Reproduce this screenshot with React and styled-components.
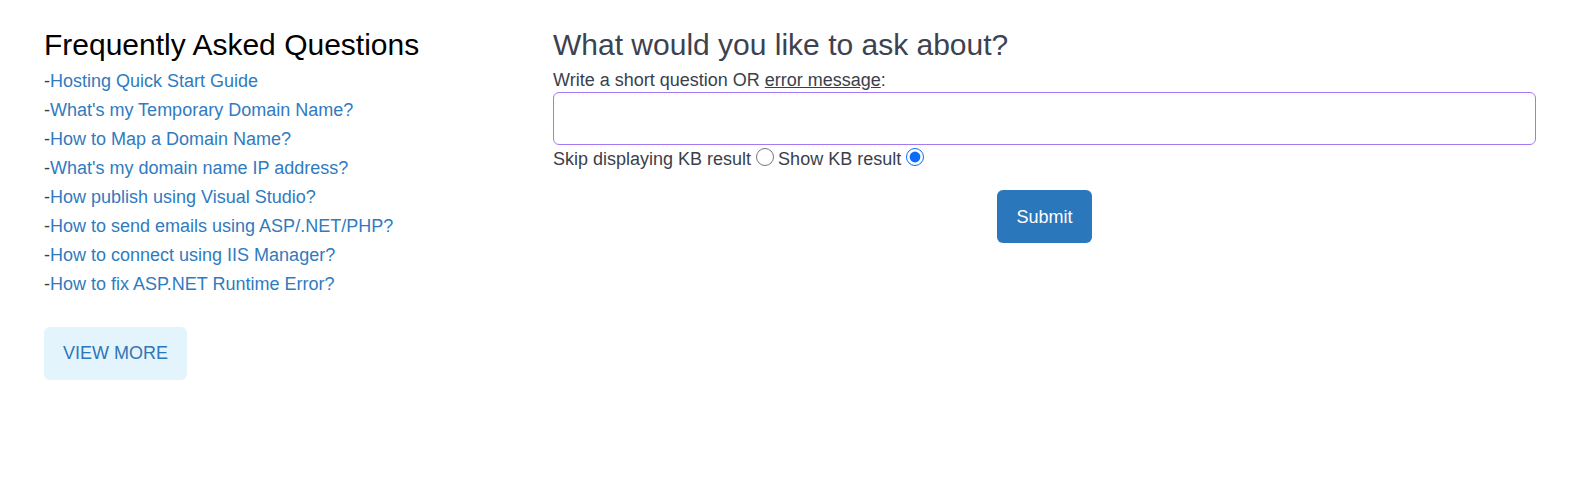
import React, { useState } from 'react';
import styled, { createGlobalStyle } from 'styled-components';

const GlobalStyle = createGlobalStyle`
  body {
    margin: 0;
    background: #ffffff;
    font-family: "Liberation Sans", Arial, sans-serif;
    color: #3a3f4b;
  }
`;

const Page = styled.div`
  display: flex;
  padding: 28px 33px 0 44px;
`;

const FaqColumn = styled.div`
  width: 509px;
  flex-shrink: 0;
`;

const FaqTitle = styled.h2`
  margin: 0 0 5px;
  font-size: 30px;
  font-weight: 400;
  color: #000000;
  line-height: 34px;
`;

const FaqList = styled.ul`
  list-style: none;
  margin: 0;
  padding: 0;
`;

const FaqItem = styled.li`
  font-size: 18px;
  line-height: 29px;
  color: #3a3f4b;

  a {
    color: #2f7bbf;
    text-decoration: none;
  }
`;

const ViewMore = styled.button`
  margin-top: 28px;
  width: 143px;
  height: 53px;
  border: none;
  border-radius: 6px;
  background: #e4f4fd;
  color: #2f76b9;
  font-family: inherit;
  font-size: 18px;
  cursor: pointer;
`;

const AskColumn = styled.div`
  flex: 1;
  display: flex;
  flex-direction: column;
`;

const AskTitle = styled.h2`
  margin: 0;
  font-size: 30px;
  font-weight: 400;
  line-height: 34px;
  color: #3d4250;
`;

const Label = styled.label`
  font-size: 18px;
  line-height: 22px;
  margin-top: 7px;
  margin-bottom: 1px;

  u {
    text-decoration: underline;
  }
`;

const QuestionInput = styled.input`
  box-sizing: border-box;
  width: 100%;
  height: 53px;
  margin: 0;
  border: 1px solid #a679f4;
  border-radius: 6px;
  outline: none;
  padding: 0 12px;
  font-family: inherit;
  font-size: 16px;
`;

const RadioRow = styled.div`
  font-size: 18px;
  line-height: 22px;
  margin-top: 3px;
  display: flex;
  align-items: center;

  input {
    margin: 0 4px 4px 5px;
    width: 18px;
    height: 18px;
    accent-color: #0a6cf5;
  }
`;

const SubmitRow = styled.div`
  display: flex;
  justify-content: center;
  margin-top: 20px;
`;

const SubmitButton = styled.button`
  width: 95px;
  height: 53px;
  padding-top: 3px;
  border: none;
  border-radius: 6px;
  background: #2a77bb;
  color: #ffffff;
  font-family: inherit;
  font-size: 18px;
  cursor: pointer;
`;

const faqs = [
  'Hosting Quick Start Guide',
  "What's my Temporary Domain Name?",
  'How to Map a Domain Name?',
  "What's my domain name IP address?",
  'How publish using Visual Studio?',
  'How to send emails using ASP/.NET/PHP?',
  'How to connect using IIS Manager?',
  'How to fix ASP.NET Runtime Error?',
];

const App = () => {
  const [mode, setMode] = useState('show');
  const [question, setQuestion] = useState('');

  return (
    <>
      <GlobalStyle />
      <Page>
        <FaqColumn>
          <FaqTitle>Frequently Asked Questions</FaqTitle>
          <FaqList>
            {faqs.map((q) => (
              <FaqItem key={q}>
                -<a href="#">{q}</a>
              </FaqItem>
            ))}
          </FaqList>
          <ViewMore>VIEW MORE</ViewMore>
        </FaqColumn>
        <AskColumn>
          <AskTitle>What would you like to ask about?</AskTitle>
          <Label htmlFor="question">
            Write a short question OR <u>error message</u>:
          </Label>
          <QuestionInput
            id="question"
            value={question}
            onChange={(e) => setQuestion(e.target.value)}
          />
          <RadioRow>
            Skip displaying KB result
            <input
              type="radio"
              name="kb"
              checked={mode === 'skip'}
              onChange={() => setMode('skip')}
            />
            Show KB result
            <input
              type="radio"
              name="kb"
              checked={mode === 'show'}
              onChange={() => setMode('show')}
            />
          </RadioRow>
          <SubmitRow>
            <SubmitButton>Submit</SubmitButton>
          </SubmitRow>
        </AskColumn>
      </Page>
    </>
  );
};

export default App;
